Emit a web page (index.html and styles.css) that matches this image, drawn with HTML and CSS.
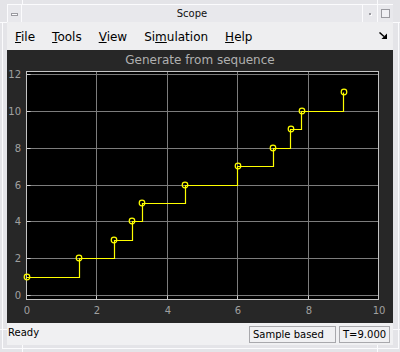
FILE: index.html
```html
<!DOCTYPE html>
<html lang="en">
<head>
    <meta charset="UTF-8">
    <title>Scope</title>
    <link rel="stylesheet" href="styles.css">
</head>
<body>
    <div class="frame">
        <!-- window manager corner grips -->
        <span class="grip grip-tl-v"></span>
        <span class="grip grip-tl-h"></span>
        <span class="grip grip-tr-v"></span>
        <span class="grip grip-tr-h"></span>
        <span class="grip grip-bl-v"></span>
        <span class="grip grip-bl-h"></span>
        <span class="grip grip-br-v"></span>
        <span class="grip grip-br-h"></span>

        <div class="titlebar">
            <span class="tb-btn tb-menu"><span class="dash"></span></span>
            <span class="tb-title">Scope</span>
            <span class="tb-btn tb-min"><span class="dot"></span></span>
            <span class="tb-btn tb-max"><span class="box"></span></span>
        </div>

        <div class="menubar">
            <span class="menu"><u>F</u>ile</span>
            <span class="menu"><u>T</u>ools</span>
            <span class="menu"><u>V</u>iew</span>
            <span class="menu">Si<u>m</u>ulation</span>
            <span class="menu"><u>H</u>elp</span>
            <svg class="dock" width="8" height="7" viewBox="0 0 8 7">
                <path d="M0.5 0.5 L5 4.5" stroke="#000" stroke-width="1.5"/>
                <path d="M8 1.5 V7 H2.5 Z" fill="#000"/>
            </svg>
        </div>

        <div class="scope">
            <svg class="plot" width="386" height="273" viewBox="0 0 386 273">
                <text class="plot-title" x="193" y="14">Generate from sequence</text>
                <rect x="19.5" y="21.5" width="352" height="228" fill="#000"/>

                <!-- grid -->
                <g class="grid">
                    <path d="M89.5 21.5 V249.5 M160.5 21.5 V249.5 M230.5 21.5 V249.5 M301.5 21.5 V249.5"/>
                    <path d="M19.5 24.5 H371.5 M19.5 61.5 H371.5 M19.5 98.5 H371.5 M19.5 135.5 H371.5 M19.5 171.5 H371.5 M19.5 208.5 H371.5 M19.5 245.5 H371.5"/>
                </g>

                <!-- ticks -->
                <g class="ticks">
                    <path d="M89.5 249.5 v-4 M160.5 249.5 v-4 M230.5 249.5 v-4 M301.5 249.5 v-4"/>
                    <path d="M19.5 24.5 h4 M19.5 61.5 h4 M19.5 98.5 h4 M19.5 135.5 h4 M19.5 171.5 h4 M19.5 208.5 h4 M19.5 245.5 h4"/>
                </g>
                <rect class="axes-box" x="19.5" y="21.5" width="352" height="228"/>

                <!-- y labels -->
                <g class="ylabels">
                    <text x="14" y="28">12</text>
                    <text x="14" y="65">10</text>
                    <text x="14" y="102">8</text>
                    <text x="14" y="139">6</text>
                    <text x="14" y="175">4</text>
                    <text x="14" y="212">2</text>
                    <text x="14" y="249">0</text>
                </g>

                <!-- x labels -->
                <g class="xlabels">
                    <text x="20" y="264">0</text>
                    <text x="90" y="264">2</text>
                    <text x="161" y="264">4</text>
                    <text x="231" y="264">6</text>
                    <text x="302" y="264">8</text>
                    <text x="372" y="264">10</text>
                </g>

                <!-- data: step output -->
                <path class="trace" d="M19.5 227.5 H72.5 V208.5 H107.5 V190.5 H125.5 V171.5 H135.5 V153.5 H178.5 V135.5 H230.5 V116.5 H266.5 V98.5 H283.5 V79.5 H294.5 V61.5 H336.5 V42.5"/>
                <g class="marks">
                    <circle cx="20" cy="227" r="2.8"/>
                    <circle cx="72" cy="208" r="2.8"/>
                    <circle cx="107" cy="190" r="2.8"/>
                    <circle cx="125" cy="171" r="2.8"/>
                    <circle cx="135" cy="153" r="2.8"/>
                    <circle cx="178" cy="135" r="2.8"/>
                    <circle cx="231" cy="116" r="2.8"/>
                    <circle cx="266" cy="98" r="2.8"/>
                    <circle cx="284" cy="79" r="2.8"/>
                    <circle cx="295" cy="61" r="2.8"/>
                    <circle cx="337" cy="42" r="2.8"/>
                </g>
            </svg>
        </div>

        <div class="statusbar">
            <span class="status-msg">Ready</span>
            <span class="status-cell sample">Sample based</span>
            <span class="status-cell time">T=9.000</span>
        </div>
    </div>
</body>
</html>
```

FILE: styles.css
```css
/* reset */
* {
    margin: 0;
    padding: 0;
    box-sizing: border-box;
}

body {
    width: 400px;
    height: 352px;
    overflow: hidden;
    background: #e4e4e8;
    font-family: "DejaVu Sans", Verdana, sans-serif;
    color: #000;
}

/* window frame */
.frame {
    position: relative;
    width: 400px;
    height: 352px;
    padding: 4px 7px 7px;
    background: #e4e4e8;
    display: flex;
    flex-direction: column;
}

.frame::before {
    content: "";
    position: absolute;
    left: 2px;
    right: 1px;
    top: 22px;
    bottom: 3px;
    border: 1px solid #fbfbfd;
    border-top: none;
}

.grip {
    position: absolute;
    background: #fbfbfd;
}

.grip-tl-v { left: 22px; top: 0; width: 1px; height: 4px; }
.grip-tl-h { left: 0; top: 22px; width: 7px; height: 1px; }
.grip-tr-v { right: 22px; top: 0; width: 1px; height: 4px; }
.grip-tr-h { right: 0; top: 22px; width: 7px; height: 1px; }
.grip-bl-v { left: 22px; bottom: 0; width: 1px; height: 7px; }
.grip-bl-h { left: 0; bottom: 22px; width: 7px; height: 1px; }
.grip-br-v { right: 22px; bottom: 0; width: 1px; height: 7px; }
.grip-br-h { right: 0; bottom: 22px; width: 7px; height: 1px; }

/* title bar */
.titlebar {
    display: flex;
    height: 18px;
    border-top: 1px solid #fbfbfd;
    background: #e8e8ec;
    position: relative;
}

.tb-btn {
    width: 15px;
    display: flex;
    align-items: center;
    justify-content: center;
}

.tb-menu {
    border-left: 1px solid #fbfbfd;
    border-right: 1px solid #fbfbfd;
}

.tb-min {
    border-left: 1px solid #fbfbfd;
}

.tb-max {
    width: 16px;
    border-left: 1px solid #fbfbfd;
}

.tb-title {
    flex: 1;
    text-align: center;
    font-size: 10px;
    line-height: 17px;
    color: #111;
}

.dash {
    width: 7px;
    height: 3px;
    border: 1px solid #9a9aa0;
    background: #fbfbfd;
    margin-top: 1px;
}

.dot {
    width: 2px;
    height: 2px;
    background: #9a9aa0;
    box-shadow: 1px 1px 0 #fbfbfd;
}

.box {
    width: 9px;
    height: 9px;
    border: 1px solid #9a9aa0;
    background: #f0f0f4;
}

/* menu bar */
.menubar {
    display: flex;
    align-items: center;
    gap: 17px;
    height: 28px;
    padding: 2px 0 0 8px;
    background: #eeeef0;
    font-size: 12px;
}

.menu u {
    text-underline-offset: 1px;
}

.dock {
    margin-left: auto;
    margin-right: 6px;
    margin-top: -3px;
}

/* scope canvas */
.scope {
    height: 273px;
    background: #272727;
}

.plot {
    display: block;
    font-family: "DejaVu Sans", sans-serif;
}

.plot-title {
    fill: #b0b0b0;
    font-size: 12px;
    text-anchor: middle;
}

.grid path {
    stroke: #7c7c7c;
    stroke-width: 1;
    fill: none;
}

.ticks path {
    stroke: #d0d0d0;
    stroke-width: 1;
    fill: none;
}

.axes-box {
    fill: none;
    stroke: #c4c4c4;
    stroke-width: 1;
}

.ylabels text {
    fill: #a0a0a0;
    font-size: 10px;
    text-anchor: end;
}

.xlabels text {
    fill: #a0a0a0;
    font-size: 10px;
    text-anchor: middle;
}

.trace {
    fill: none;
    stroke: #ffff00;
    stroke-width: 1.2;
}

.marks circle {
    fill: none;
    stroke: #ffff00;
    stroke-width: 1.2;
}

/* status bar */
.statusbar {
    display: flex;
    align-items: center;
    height: 22px;
    gap: 3px;
    padding: 0 3px 0 1px;
    background: #f0f0f2;
    font-size: 10px;
}

.status-msg {
    flex: 1;
    margin-top: -3px;
}

.status-cell {
    height: 17px;
    line-height: 15px;
    border: 1px solid #a8a8ac;
    padding: 0 3px;
}

.sample {
    width: 87px;
}

.time {
    width: 51px;
}
```
